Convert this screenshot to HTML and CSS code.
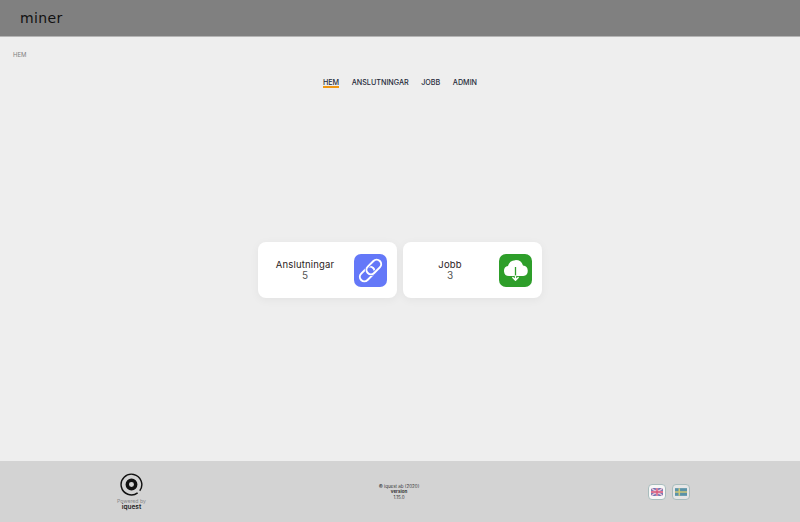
FILE: index.html
```html
<!DOCTYPE html>
<html lang="sv">
<head>
  <meta charset="UTF-8" />
  <meta name="viewport" content="width=device-width, initial-scale=1.0"/>
  <title>miner</title>
  <link rel="stylesheet" href="styles.css">
</head>
<body>

<header class="topbar">
  <div class="brand">miner</div>
</header>

<main class="main">
  <div class="breadcrumb">HEM</div>

  <nav class="tabs">
    <a class="tab active">HEM</a>
    <a class="tab">ANSLUTNINGAR</a>
    <a class="tab">JOBB</a>
    <a class="tab">ADMIN</a>
  </nav>

  <div class="cards">
    <div class="card">
      <div class="card-text">
        <div class="card-title">Anslutningar</div>
        <div class="card-value">5</div>
      </div>
      <div class="card-icon blue">
        <svg viewBox="0 0 33 33" width="33" height="33" fill="none">
          <rect x="4.7" y="15.5" width="17" height="9" rx="4.5" transform="rotate(-45 13.2 20)" stroke="#fff" stroke-width="2"/>
          <rect x="11.3" y="8.5" width="17" height="9" rx="4.5" transform="rotate(-45 19.8 13)" stroke="#6478f8" stroke-width="3.4"/>
          <rect x="11.3" y="8.5" width="17" height="9" rx="4.5" transform="rotate(-45 19.8 13)" stroke="#fff" stroke-width="2"/>
        </svg>
      </div>
    </div>

    <div class="card">
      <div class="card-text">
        <div class="card-title">Jobb</div>
        <div class="card-value">3</div>
      </div>
      <div class="card-icon green">
        <svg viewBox="0 0 33 33" width="33" height="33">
          <path fill="#fff" d="M10 22a5 5 0 0 1-1-9.9 7.8 7.8 0 0 1 15-.6 5.3 5.3 0 0 1 .3 10.5z"/>
          <path fill="none" stroke="#2e9e2a" stroke-width="1.3" d="M16.5 13v9"/>
          <path fill="none" stroke="#fff" stroke-width="1.4" stroke-linecap="round" stroke-linejoin="round" d="M16.5 22v3.5M13.8 23.6l2.7 2.7 2.7-2.7"/>
        </svg>
      </div>
    </div>
  </div>
</main>

<footer class="footer">
  <div class="powered">
    <svg viewBox="0 0 24 24" width="23" height="23" fill="none" stroke="#111">
      <path stroke-width="1.5" d="M20.6 18.5A10.8 10.8 0 1 0 18.4 20.7"/>
      <circle cx="12" cy="12" r="4.4" stroke-width="3.6"/>
    </svg>
    <div class="powered-by">Powered by</div>
    <div class="powered-name">iquest</div>
  </div>

  <div class="copy">
    <div>© iquest ab (2020)</div>
    <div class="copy-label">version</div>
    <div>1.15.0</div>
  </div>

  <div class="langs">
    <button class="lang selected">
      <svg viewBox="0 0 14 9" width="12" height="8">
        <rect width="14" height="9" fill="#5560a8"/>
        <path d="M0 0l14 9M14 0L0 9" stroke="#e8c8d8" stroke-width="1.8"/>
        <path d="M7 0v9M0 4.5h14" stroke="#e8c8d8" stroke-width="3"/>
        <path d="M7 0v9M0 4.5h14" stroke="#d8577a" stroke-width="1.6"/>
      </svg>
    </button>
    <button class="lang">
      <svg viewBox="0 0 14 9" width="12" height="8">
        <rect width="14" height="9" fill="#5a93a8"/>
        <path d="M5 0v9M0 4.5h14" stroke="#cfc878" stroke-width="1.8"/>
      </svg>
    </button>
  </div>
</footer>

</body>
</html>
```

FILE: styles.css
```css
* {
  box-sizing: border-box;
}

html, body {
  height: 100%;
}

body {
  margin: 0;
  display: flex;
  flex-direction: column;
  font-family: 'Inter', 'Noto Sans', sans-serif;
  background: #eeeeee;
  color: #222;
}

.topbar {
  height: 37px;
  flex-shrink: 0;
  padding-left: 20px;
  display: flex;
  align-items: center;
  background: #808080;
  border-bottom: 1px solid #b5b5b5;
}

.brand {
  font-family: 'DejaVu Sans', sans-serif;
  font-size: 14px;
  letter-spacing: 0.4px;
  color: #111;
}

.main {
  flex: 1;
  display: flex;
  flex-direction: column;
  min-height: 0;
}

.breadcrumb {
  padding: 14px 0 0 13px;
  font-size: 6px;
  line-height: 8px;
  color: #808080;
}

.tabs {
  display: flex;
  justify-content: center;
  gap: 12.5px;
  margin-top: 20px;
}

.tab {
  font-size: 7.2px;
  line-height: 7px;
  font-weight: 500;
  color: #1f2a3a;
  border-bottom: 2px solid transparent;
}

.tab.active {
  border-bottom-color: #f0960e;
}

.cards {
  flex: 1;
  display: flex;
  justify-content: center;
  align-items: center;
  gap: 6px;
  padding-bottom: 9px;
}

.card {
  width: 139px;
  height: 56px;
  display: flex;
  align-items: center;
  justify-content: space-between;
  padding: 0 10px 0 0;
  background: #fff;
  border-radius: 8px;
  box-shadow: 0 2px 10px rgba(0, 0, 0, 0.05);
}

.card-text {
  flex: 1;
  text-align: center;
  padding-right: 2px;
}

.card-title {
  font-size: 9.5px;
  line-height: 11px;
  letter-spacing: 0.15px;
  color: #2a2222;
}

.card-value {
  font-size: 10px;
  line-height: 11px;
  color: #555;
}

.card-icon {
  width: 33px;
  height: 33px;
  display: flex;
  align-items: center;
  justify-content: center;
  border-radius: 7px;
}

.card-icon.blue {
  background: #6478f8;
}

.card-icon.green {
  background: #2e9e2a;
}

.footer {
  height: 61px;
  flex-shrink: 0;
  display: flex;
  align-items: center;
  justify-content: space-between;
  padding: 0 110px 0 117px;
  background: #d3d3d3;
}

.powered {
  display: flex;
  flex-direction: column;
  align-items: center;
}

.powered-by {
  margin-top: 2px;
  font-size: 5.2px;
  line-height: 6px;
  color: #888;
}

.powered-name {
  font-size: 6.5px;
  line-height: 7px;
  font-weight: 600;
  color: #222;
}

.copy {
  margin-left: 4px;
  padding-top: 1px;
  text-align: center;
  font-size: 4.5px;
  line-height: 5.5px;
  color: #333;
}

.copy-label {
  font-weight: 700;
}

.langs {
  display: flex;
  gap: 6px;
}

.lang {
  width: 18px;
  height: 16px;
  padding: 0;
  display: flex;
  align-items: center;
  justify-content: center;
  background: #e6e6e6;
  border: 1px solid #a9bdbd;
  border-radius: 4px;
}

.lang.selected {
  background: #f7f7f7;
}
```
